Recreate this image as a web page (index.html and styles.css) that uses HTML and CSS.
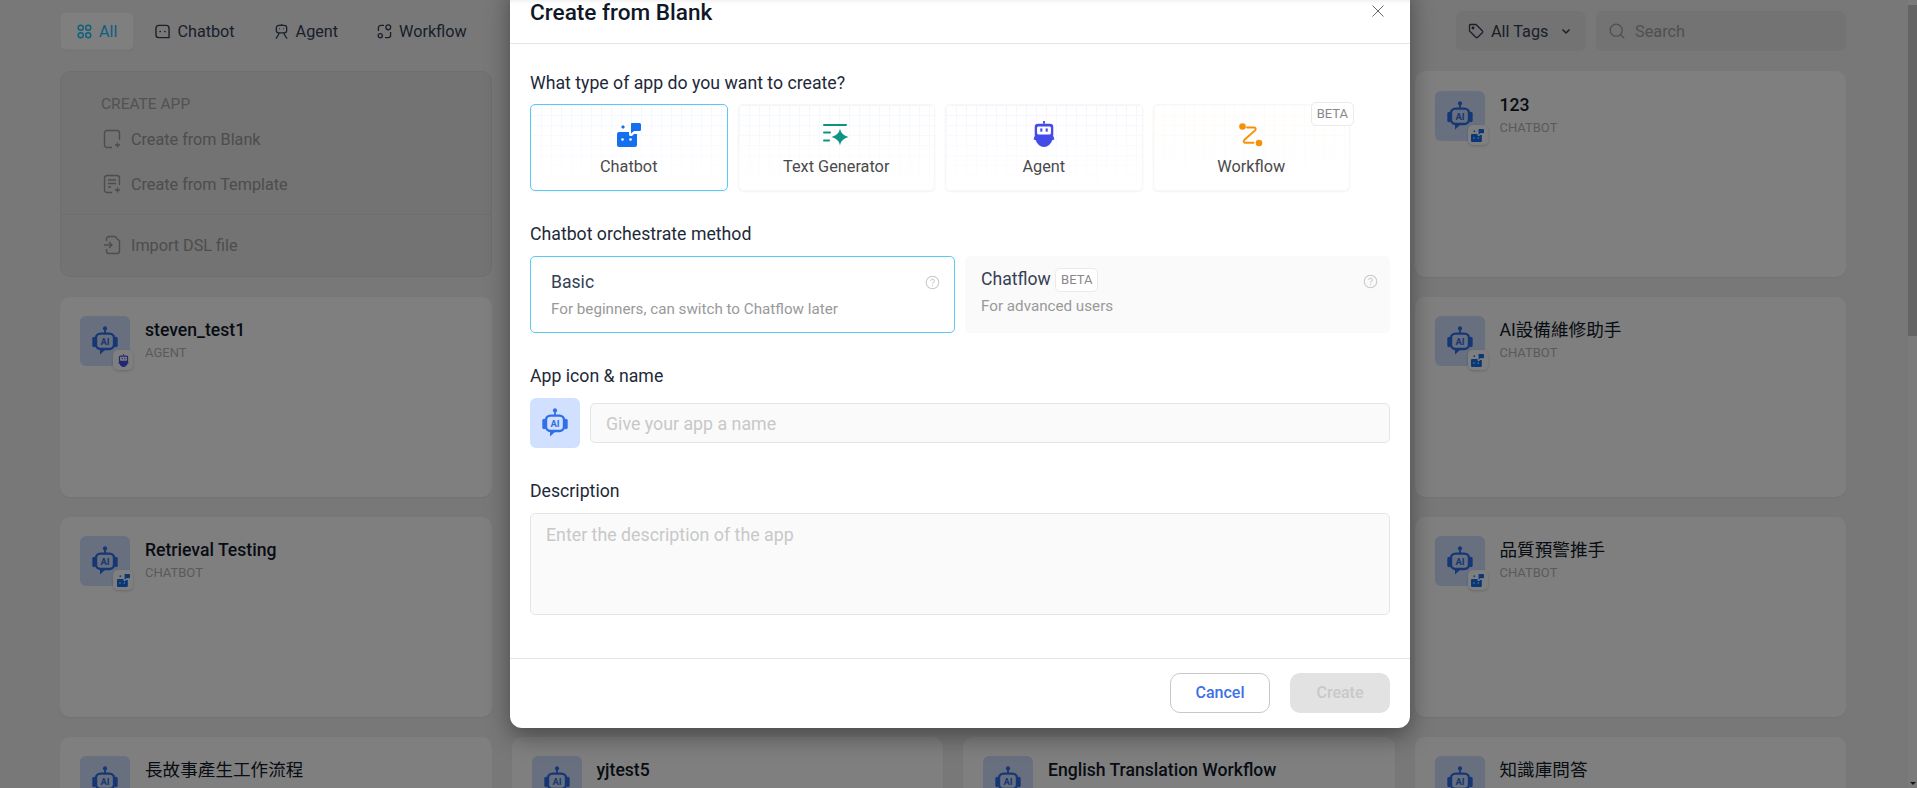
FILE: index.html
```html
<!DOCTYPE html>
<html lang="en">
<head>
<meta charset="utf-8">
<title>Create from Blank</title>
<link rel="stylesheet" href="styles.css">
</head>
<body>
<svg class="defs" width="0" height="0" aria-hidden="true">
  <symbol id="robot" viewBox="0 0 26 30">
    <circle cx="13" cy="2.400" r="2.100" fill="currentColor"/>
    <path d="M13 4v3" stroke="currentColor" stroke-width="1.800"/>
    <path d="M2 12.500v7" stroke="currentColor" stroke-width="3.400" stroke-linecap="round"/>
    <path d="M24 12.500v7" stroke="currentColor" stroke-width="3.400" stroke-linecap="round"/>
    <rect x="4" y="7.600" width="18" height="15.400" rx="4.500" fill="#d1e0ff" stroke="currentColor" stroke-width="2.400"/>
    <path d="M8 23h6l-6 5.500z" fill="currentColor"/>
  </symbol>
  <symbol id="chatbot" viewBox="0 0 24 24">
    <path d="M2 9h10v2.500a1.500 1.500 0 0 0 1.500 1.500H15l2-2h3v11a2 2 0 0 1-2 2H2a2 2 0 0 1-2-2V11a2 2 0 0 1 2-2z" fill="currentColor"/>
    <path d="M14.500 0h8A1.500 1.500 0 0 1 24 1.500v5A1.500 1.500 0 0 1 22.500 8H17l-3 2.500V1A1 1 0 0 1 14.500 0z" fill="currentColor"/>
    <path d="M6 2l2 2-2 2-2-2z" fill="currentColor"/>
    <circle cx="5.500" cy="16.500" r="1.300" fill="#fff"/>
    <circle cx="13.500" cy="16.500" r="1.300" fill="#fff"/>
  </symbol>
  <symbol id="agent" viewBox="0 0 24 28">
    <path d="M12 0v3" stroke="currentColor" stroke-width="2"/>
    <rect x="2" y="3" width="20" height="15" rx="3.500" fill="currentColor"/>
    <rect x="4.500" y="6" width="15" height="8.500" rx="1.500" fill="#fff"/>
    <rect x="8" y="8" width="2.200" height="3.500" fill="currentColor"/>
    <rect x="13.800" y="8" width="2.200" height="3.500" fill="currentColor"/>
    <path d="M3 16h18c1 0 2 2 2 3.500 0 .8-1 1-2 1-1.300 4-5 7.500-9 7.500s-7.700-3.500-9-7.500c-1 0-2-.2-2-1C1 18 2 16 3 16z" fill="currentColor"/>
  </symbol>
  <symbol id="help" viewBox="0 0 16 16">
    <circle cx="8" cy="8" r="6.700" fill="none" stroke="currentColor" stroke-width="1.100"/>
    <path d="M6.200 6.300a1.900 1.900 0 1 1 2.900 1.600c-.7.400-1.100.8-1.100 1.500" fill="none" stroke="currentColor" stroke-width="1.100"/>
    <circle cx="8" cy="11.400" r=".7" fill="currentColor"/>
  </symbol>
</svg>

<div class="page">
  <main class="main">
    <header class="topbar">
      <nav class="tabs">
        <a class="tab tab-active">
          <svg class="tab-icon" viewBox="0 0 16 16" fill="none" stroke="currentColor" stroke-width="1.500"><circle cx="4" cy="4" r="2.700"/><circle cx="12" cy="4" r="2.700"/><circle cx="4" cy="12" r="2.700"/><circle cx="12" cy="12" r="2.700"/></svg>
          All
        </a>
        <a class="tab">
          <svg class="tab-icon" viewBox="0 0 16 16" fill="none" stroke="currentColor" stroke-width="1.500"><path d="M4 1.500h8A3 3 0 0 1 15 4.500v10H4a3 3 0 0 1-3-3v-7a3 3 0 0 1 3-3z"/><circle cx="5.500" cy="8" r=".9" fill="currentColor" stroke="none"/><circle cx="10.500" cy="8" r=".9" fill="currentColor" stroke="none"/></svg>
          Chatbot
        </a>
        <a class="tab">
          <svg class="tab-icon" viewBox="0 0 16 16" fill="none" stroke="currentColor" stroke-width="1.400"><path d="M8 0v1.500"/><rect x="2.500" y="1.500" width="11" height="8" rx="2.500"/><path d="M5.500 5h.6M9.900 5h.6" stroke-width="1.800"/><path d="M5.500 9.500C5 12 3.500 13.500 2 15.500M10.500 9.500c.5 2.500 2 4 3.500 6" /></svg>
          Agent
        </a>
        <a class="tab">
          <svg class="tab-icon" viewBox="0 0 16 16" fill="none" stroke="currentColor" stroke-width="1.400"><circle cx="12" cy="3.500" r="2.600"/><circle cx="3.500" cy="12.500" r="2.200"/><path d="M7.500 1.500H4A2.500 2.500 0 0 0 1.500 4v3.500M14.500 8.500V12a2.500 2.500 0 0 1-2.500 2.500H8.500"/></svg>
          Workflow
        </a>
      </nav>
      <div class="tools">
        <div class="tag-select">
          <svg class="tool-icon" viewBox="0 0 16 16" fill="none" stroke="currentColor" stroke-width="1.300"><path d="M1.500 2.500a1 1 0 0 1 1-1H8l6.300 6.300a1.300 1.300 0 0 1 0 1.900l-4.600 4.600a1.300 1.300 0 0 1-1.900 0L1.500 8z"/><circle cx="5" cy="5" r=".8" fill="currentColor"/></svg>
          <span>All Tags</span>
          <svg class="chevron" viewBox="0 0 12 12" fill="none" stroke="currentColor" stroke-width="1.500"><path d="M2.500 4.500L6 8l3.500-3.500"/></svg>
        </div>
        <div class="search">
          <svg class="tool-icon" viewBox="0 0 16 16" fill="none" stroke="currentColor" stroke-width="1.300"><circle cx="7.200" cy="7.200" r="6"/><path d="M11.700 11.700l3.500 3.500"/></svg>
          <span>Search</span>
        </div>
      </div>
    </header>

    <section class="grid">
      <div class="card create-card">
        <div class="create-top">
          <div class="create-title">CREATE APP</div>
          <div class="create-item">
            <svg class="create-icon" viewBox="0 0 18 20" fill="none" stroke="currentColor" stroke-width="1.400"><path d="M9 18.500H4A2.500 2.500 0 0 1 1.500 16V4A2.500 2.500 0 0 1 4 1.500h10A2.500 2.500 0 0 1 16.500 4v7"/><path d="M14.500 13.500v5M12 16h5"/></svg>
            Create from Blank
          </div>
          <div class="create-item">
            <svg class="create-icon" viewBox="0 0 18 20" fill="none" stroke="currentColor" stroke-width="1.400"><path d="M9 18.500H4A2.500 2.500 0 0 1 1.500 16V4A2.500 2.500 0 0 1 4 1.500h10A2.500 2.500 0 0 1 16.500 4v7"/><path d="M5 6h8M5 9.500h8M5 13h3"/><path d="M14.500 13.500v5M12 16h5"/></svg>
            Create from Template
          </div>
        </div>
        <div class="create-bottom">
          <div class="create-item">
            <svg class="create-icon" viewBox="0 0 18 20" fill="none" stroke="currentColor" stroke-width="1.400"><path d="M3.500 6V4A2.500 2.500 0 0 1 6 1.500h6l4.500 4.500v10A2.500 2.500 0 0 1 14 18.500H6A2.500 2.500 0 0 1 3.500 16v-2"/><path d="M1 10h8M6 7l3 3-3 3"/></svg>
            Import DSL file
          </div>
        </div>
      </div>
      <div class="card"></div>
      <div class="card"></div>
      <article class="card app-card app-card-first">
        <div class="app-icon"><svg class="robot" viewBox="0 0 26 30"><use href="#robot"/><text x="13" y="18.900" text-anchor="middle" class="ai">AI</text></svg><span class="badge"><svg class="badge-icon badge-blue"><use href="#chatbot"/></svg></span></div>
        <div><div class="app-name">123</div><div class="app-type">CHATBOT</div></div>
      </article>

      <article class="card app-card">
        <div class="app-icon"><svg class="robot" viewBox="0 0 26 30"><use href="#robot"/><text x="13" y="18.900" text-anchor="middle" class="ai">AI</text></svg><span class="badge"><svg class="badge-icon badge-indigo"><use href="#agent"/></svg></span></div>
        <div><div class="app-name">steven_test1</div><div class="app-type">AGENT</div></div>
      </article>
      <div class="card"></div>
      <div class="card"></div>
      <article class="card app-card">
        <div class="app-icon"><svg class="robot" viewBox="0 0 26 30"><use href="#robot"/><text x="13" y="18.900" text-anchor="middle" class="ai">AI</text></svg><span class="badge"><svg class="badge-icon badge-blue"><use href="#chatbot"/></svg></span></div>
        <div><div class="app-name app-name-cjk">AI設備維修助手</div><div class="app-type">CHATBOT</div></div>
      </article>

      <article class="card app-card">
        <div class="app-icon"><svg class="robot" viewBox="0 0 26 30"><use href="#robot"/><text x="13" y="18.900" text-anchor="middle" class="ai">AI</text></svg><span class="badge"><svg class="badge-icon badge-blue"><use href="#chatbot"/></svg></span></div>
        <div><div class="app-name">Retrieval Testing</div><div class="app-type">CHATBOT</div></div>
      </article>
      <div class="card"></div>
      <div class="card"></div>
      <article class="card app-card">
        <div class="app-icon"><svg class="robot" viewBox="0 0 26 30"><use href="#robot"/><text x="13" y="18.900" text-anchor="middle" class="ai">AI</text></svg><span class="badge"><svg class="badge-icon badge-blue"><use href="#chatbot"/></svg></span></div>
        <div><div class="app-name app-name-cjk">品質預警推手</div><div class="app-type">CHATBOT</div></div>
      </article>

      <article class="card app-card">
        <div class="app-icon"><svg class="robot" viewBox="0 0 26 30"><use href="#robot"/><text x="13" y="18.900" text-anchor="middle" class="ai">AI</text></svg></div>
        <div><div class="app-name app-name-cjk">長故事產生工作流程</div></div>
      </article>
      <article class="card app-card">
        <div class="app-icon"><svg class="robot" viewBox="0 0 26 30"><use href="#robot"/><text x="13" y="18.900" text-anchor="middle" class="ai">AI</text></svg></div>
        <div><div class="app-name">yjtest5</div></div>
      </article>
      <article class="card app-card">
        <div class="app-icon"><svg class="robot" viewBox="0 0 26 30"><use href="#robot"/><text x="13" y="18.900" text-anchor="middle" class="ai">AI</text></svg></div>
        <div><div class="app-name">English Translation Workflow</div></div>
      </article>
      <article class="card app-card">
        <div class="app-icon"><svg class="robot" viewBox="0 0 26 30"><use href="#robot"/><text x="13" y="18.900" text-anchor="middle" class="ai">AI</text></svg></div>
        <div><div class="app-name app-name-cjk">知識庫問答</div></div>
      </article>
    </section>
  </main>
  <div class="scrollbar">
    <div class="scroll-thumb"></div>
    <div class="scroll-arrow"></div>
  </div>
</div>

<div class="overlay">
  <div class="modal">
    <div class="modal-head">
      <h1 class="modal-title">Create from Blank</h1>
      <svg class="close" viewBox="0 0 12 12" fill="none" stroke="currentColor" stroke-width="1"><path d="M.5.500l11 11M11.500.500l-11 11"/></svg>
    </div>
    <div class="modal-body">
      <div class="label label-first">What type of app do you want to create?</div>
      <div class="types">
        <div class="type type-blue type-selected">
          <svg class="type-icon icon-blue"><use href="#chatbot"/></svg>
          <span>Chatbot</span>
        </div>
        <div class="type type-teal">
          <svg class="type-icon type-icon-wide icon-teal" viewBox="0 0 26 24">
            <path d="M1 2h22M1 9.500h6M1 17.500h5" stroke="currentColor" stroke-width="2" stroke-linecap="round"/>
            <path d="M17 5.500c.8 4.200 2.700 6.500 8.500 8.500-5.800 2-7.700 4.300-8.500 8.500-.8-4.200-2.700-6.500-8.500-8.500 5.800-2 7.700-4.300 8.500-8.500z" fill="currentColor"/>
          </svg>
          <span>Text Generator</span>
        </div>
        <div class="type type-indigo">
          <svg class="type-icon type-icon-tall icon-indigo"><use href="#agent"/></svg>
          <span>Agent</span>
        </div>
        <div class="type type-orange">
          <svg class="type-icon icon-orange" viewBox="0 0 24 24">
            <circle cx="3.500" cy="3.500" r="3.300" fill="currentColor"/>
            <circle cx="20" cy="20" r="3.300" fill="currentColor"/>
            <path d="M8 4.500h7c1.500 0 2.200 1.500 1.300 2.600L5.200 17c-1 1.200-.4 2.800 1.300 2.800H14.500" fill="none" stroke="currentColor" stroke-width="1.900" stroke-linecap="round"/>
          </svg>
          <span>Workflow</span>
          <span class="beta beta-corner">BETA</span>
        </div>
      </div>

      <div class="label">Chatbot orchestrate method</div>
      <div class="methods">
        <div class="method method-selected">
          <div class="method-name">Basic</div>
          <div class="method-desc">For beginners, can switch to Chatflow later</div>
          <svg class="help"><use href="#help"/></svg>
        </div>
        <div class="method method-muted">
          <div class="method-name">Chatflow <span class="beta">BETA</span></div>
          <div class="method-desc">For advanced users</div>
          <svg class="help"><use href="#help"/></svg>
        </div>
      </div>

      <div class="label">App icon &amp; name</div>
      <div class="name-row">
        <div class="app-icon app-icon-modal"><svg class="robot" viewBox="0 0 26 30"><use href="#robot"/><text x="13" y="18.900" text-anchor="middle" class="ai">AI</text></svg></div>
        <div class="field name-field">Give your app a name</div>
      </div>

      <div class="label">Description</div>
      <div class="field desc-field">Enter the description of the app</div>
    </div>
    <div class="modal-foot">
      <div class="btn btn-cancel">Cancel</div>
      <div class="btn btn-create">Create</div>
    </div>
  </div>
</div>
</body>
</html>
```

FILE: styles.css
```css
* { box-sizing: border-box; }
html, body { margin: 0; height: 100%; overflow: hidden; }
body {
  font-family: Roboto, "Noto Sans CJK TC", sans-serif;
  font-size: 16px;
  color: #1d2939;
  background: #f0f1f3;
}
.defs { position: absolute; }
.ai { font: 700 9.500px Roboto, sans-serif; fill: currentColor; }

.page { display: flex; height: 788px; overflow: hidden; }
.main { flex: 1; min-width: 0; padding: 11px 62px 0 60px; }
.scrollbar {
  width: 9px;
  flex: none;
  padding-top: 5px;
  background: #f6f6f6;
  display: flex;
  flex-direction: column;
  justify-content: space-between;
  align-items: center;
}
.scroll-thumb { width: 100%; height: 331px; background: #c8c8c8; }
.scroll-arrow {
  width: 0; height: 0;
  margin-bottom: 3px;
  border-left: 3px solid transparent;
  border-right: 3px solid transparent;
  border-top: 3px solid #333;
}

.topbar { display: flex; justify-content: space-between; align-items: center; height: 40px; margin-bottom: 20px; }
.tabs { display: flex; align-items: center; }
.tab { display: flex; align-items: center; height: 38px; gap: 7px; padding: 0 16px; margin-right: 7px; font-size: 16.200px; color: #344054; }
.tab-active {
  margin-right: 5px;
  background: #fff;
  color: #1cc0ff;
  border: 1px solid #f2f2f2;
  border-radius: 5px;
  box-shadow: 0 1px 2px rgba(16,24,40,.05);
}
.tab-icon { width: 15px; height: 15px; flex: none; }
.tools { display: flex; gap: 10px; }
.tag-select, .search {
  display: flex; align-items: center; height: 40px; border-radius: 7px; background: #e6e6e6;
  font-size: 16.300px;
}
.tag-select { width: 130px; padding: 0 12px; gap: 7px; color: #344054; }
.search { width: 250px; padding: 0 13px; gap: 10px; color: #a0a0a0; }
.tool-icon { width: 16px; height: 16px; flex: none; }
.chevron { width: 12px; height: 12px; margin-left: 5px; flex: none; }

.grid {
  display: grid;
  grid-template-columns: repeat(4, 1fr);
  grid-template-rows: 206px repeat(3, 200px);
  gap: 20px;
}
.card { background: #fff; border-radius: 10px; box-shadow: 0 1px 2px rgba(16,24,40,.06); }
.create-card {
  background: #e6e6e6;
  border: 1px solid #dedede;
  box-shadow: none;
  display: flex;
  flex-direction: column;
}
.create-top { padding: 21px 0 0 40px; height: 143px; border-bottom: 1px solid #dcdcdc; }
.create-bottom { padding: 18px 0 0 40px; }
.create-title { font-size: 15.500px; line-height: 22px; color: #a4a4a4; margin-bottom: 12px; }
.create-item { display: flex; align-items: center; gap: 10px; height: 24px; font-size: 16.200px; color: #9a9a9a; margin-bottom: 21px; }
.create-icon { width: 18px; height: 20px; margin-left: 2px; flex: none; }

.app-card { display: flex; gap: 15px; padding: 19px 20px; }
.app-card-first { padding-top: 20px; }
.app-icon {
  position: relative;
  width: 50px; height: 50px;
  flex: none;
  display: flex; align-items: center; justify-content: center;
  background: #d1e0ff;
  border-radius: 6px;
  color: #2f6fe8;
}
.robot { width: 26px; height: 30px; }
.badge {
  position: absolute;
  right: -3px; bottom: -4px;
  width: 20px; height: 20px;
  display: flex; align-items: center; justify-content: center;
  background: #fff;
  border-radius: 5px;
  box-shadow: 0 1px 3px rgba(16,24,40,.2);
}
.badge-icon { width: 13px; height: 13px; }
.badge-blue { color: #1570ef; }
.badge-indigo { color: #444ce7; }
.app-name { margin-top: 2px; font-size: 17.600px; line-height: 24px; font-weight: 500; color: #101828; }
.app-name-cjk { font-weight: 400; }
.app-type { margin-top: 2px; font-size: 13px; line-height: 18px; color: #b5b5b5; }

.overlay {
  position: absolute;
  inset: 0;
  background: rgba(0,0,0,.5);
  display: flex;
  justify-content: center;
  align-items: flex-end;
  padding: 0 0 60px 3px;
  overflow: hidden;
}
.modal {
  width: 900px;
  flex: none;
  background: #fff;
  border-radius: 12px;
  box-shadow: 0 8px 24px rgba(0,0,0,.4);
}
.modal-head {
  display: flex;
  justify-content: space-between;
  align-items: center;
  height: 61px;
  padding: 16px 26px 16px 20px;
  border-bottom: 1px solid #e5e5e5;
  border-radius: 12px 12px 0 0;
  background: linear-gradient(#f2f2f2 17px, #fff 21px);
}
.modal-title { margin: 0; font-size: 22.600px; line-height: 28px; font-weight: 500; color: #101828; }
.close { width: 12px; height: 12px; margin-bottom: 4px; color: #666; }
.modal-body { padding: 27px 20px 43px; }
.label { height: 24px; line-height: 24px; margin: 31px 0 10px; font-size: 17.700px; color: #1d2939; }
.label-first { margin-top: 0; margin-bottom: 9px; }

.types { display: grid; grid-template-columns: repeat(4, 1fr); gap: 10px; width: 820px; }
.type {
  position: relative;
  height: 87px;
  display: flex; flex-direction: column; align-items: center;
  padding-top: 18px;
  gap: 8px;
  font-size: 16.300px;
  border: 1px solid #f7f7f7;
  border-radius: 5px;
  color: #4a4a4a;
  line-height: 24px;
  box-shadow: 0 1px 2px rgba(16,24,40,.05);
  background-image:
    linear-gradient(rgba(255,255,255,0), #fff),
    linear-gradient(var(--line) 1px, transparent 1px),
    linear-gradient(90deg, var(--line) 1px, transparent 1px);
  background-size: 100% 100%, 10px 10px, 10px 10px;
}
.type-blue { --line: #f3f7ff; }
.type-teal { --line: #f3f7fc; }
.type-indigo { --line: #f5f5ff; }
.type-orange { --line: #fffaf4; }
.type-selected { border-color: #5cc8f5; }
.type-icon { width: 24px; height: 24px; flex: none; }
.type-icon-wide { width: 26px; }
.type-icon-tall { height: 26px; margin: -2px 0 0; }
.icon-blue { color: #1570ef; }
.icon-teal { color: #0e9384; }
.icon-indigo { color: #444ce7; }
.icon-orange { color: #f79009; }
.beta {
  display: inline-block;
  padding: 0 5px;
  height: 24px;
  line-height: 22px;
  font-size: 13px;
  color: #888;
  background: #fff;
  border: 1px solid #eaeaea;
  border-radius: 5px;
  vertical-align: 1px;
}
.beta-corner { position: absolute; top: -3px; right: -5px; }

.methods { display: grid; grid-template-columns: 1fr 1fr; gap: 10px; }
.method { position: relative; height: 77px; padding: 13px 20px; border: 1px solid transparent; border-radius: 5px; }
.method-selected { border-color: #5cc8f5; }
.method-selected .method-desc { margin-top: 5px; }
.method-muted { background: #fafafa; padding: 10px 15px; }
.method-name { font-size: 17.600px; line-height: 24px; color: #344054; }
.method-desc { margin-top: 4px; font-size: 15.200px; line-height: 20px; color: #999; }
.help { position: absolute; top: 18px; right: 14px; width: 15px; height: 15px; color: #c8c8c8; }
.method-muted .help { top: 17px; right: 11px; }

.name-row { display: flex; align-items: center; gap: 10px; }
.app-icon-modal { width: 50px; height: 50px; }
.field {
  background: #fafafa;
  border: 1px solid #e5e5e5;
  border-radius: 5px;
  font-size: 17.800px;
  color: #c8c8c8;
}
.name-field { flex: 1; height: 40px; line-height: 39px; padding: 0 15px; }
.desc-field { height: 102px; padding: 9px 15px; line-height: 24px; }

.modal-foot {
  display: flex; justify-content: flex-end; gap: 20px;
  padding: 14px 20px 15px;
  border-top: 1px solid #e5e5e5;
}
.btn {
  width: 100px; height: 40px;
  border-radius: 10px;
  text-align: center;
  font-weight: 500;
}
.btn-cancel { line-height: 38px; border: 1px solid #c8c8c8; color: #3f70ea; }
.btn-create { line-height: 40px; background: #e2e2e2; color: #c8c8c8; }
```
